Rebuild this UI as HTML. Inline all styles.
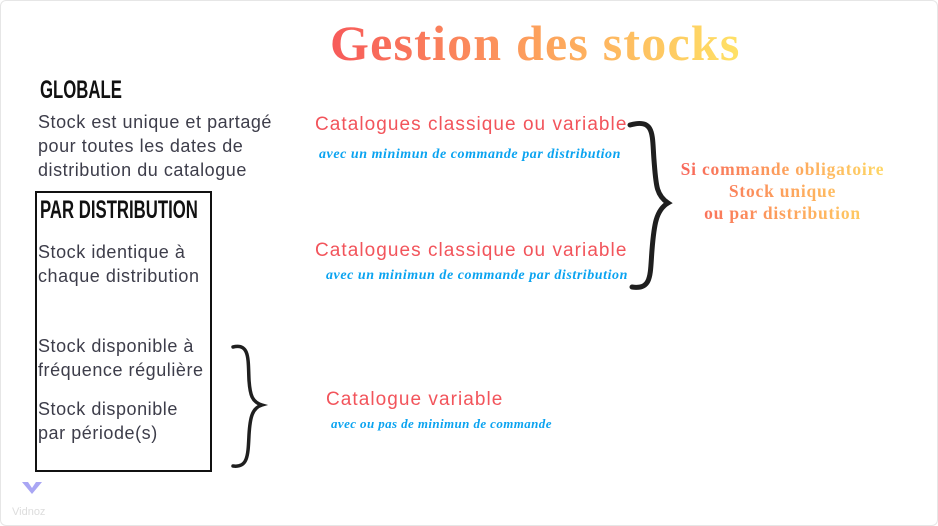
<!DOCTYPE html>
<html><head><meta charset="utf-8"><style>
body{margin:0;width:938px;height:526px;background:#fff;position:relative;overflow:hidden;font-family:"Liberation Sans","DejaVu Sans",sans-serif}
.a{position:absolute;white-space:nowrap}
.t{font-size:18px;letter-spacing:.55px;color:#3d3d4a;line-height:24px}
.h{font-family:"Liberation Sans Narrow","Liberation Sans",sans-serif;font-weight:bold;color:#111;font-size:25px;transform-origin:0 0;transform:scaleX(.67)}
.r{color:#f2545b;font-size:19px;letter-spacing:1.05px}
.b{color:#0aa3f0;font-family:"Liberation Serif",serif;font-style:italic;font-weight:bold;font-size:14px;letter-spacing:.55px}
.g{background:linear-gradient(90deg,#f75a5a,#fda05c 50%,#ffe266);-webkit-background-clip:text;background-clip:text;color:transparent}
</style></head><body>
<div style="position:absolute;inset:0;border:1px solid #e6e6e6;border-radius:6px"></div>
<div class="a g" style="left:330px;top:12px;font-family:'Liberation Serif',serif;font-weight:bold;font-size:50px;letter-spacing:1.2px;line-height:62px">Gestion des stocks</div>
<div class="a h" style="left:40px;top:76px">GLOBALE</div>
<div class="a t" style="left:38px;top:110px">Stock est unique et partagé<br>pour toutes les dates de<br>distribution du catalogue</div>
<div class="a" style="left:35px;top:191px;width:173px;height:277px;border:2px solid #111"></div>
<div class="a h" style="left:40px;top:196px">PAR DISTRIBUTION</div>
<div class="a t" style="left:38px;top:240px">Stock identique à<br>chaque distribution</div>
<div class="a t" style="left:38px;top:334px">Stock disponible à<br>fréquence régulière</div>
<div class="a t" style="left:38px;top:397px">Stock disponible<br>par période(s)</div>
<div class="a r" style="left:315px;top:114px">Catalogues classique ou variable</div>
<div class="a b" style="left:319px;top:147px">avec un minimun de commande par distribution</div>
<div class="a r" style="left:315px;top:240px">Catalogues classique ou variable</div>
<div class="a b" style="left:326px;top:268px">avec un minimun de commande par distribution</div>
<div class="a r" style="left:326px;top:389px">Catalogue variable</div>
<div class="a b" style="left:331px;top:416px;font-size:13px;letter-spacing:.4px">avec  ou pas de minimun de commande</div>
<div class="a g" style="left:660px;top:158px;width:245px;text-align:center;font-family:'Liberation Serif',serif;font-weight:bold;font-size:17.5px;letter-spacing:.8px;line-height:22px">Si commande obligatoire<br>Stock unique<br>ou par distribution</div>
<svg class="a" style="left:0;top:0" width="938" height="526">
<path d="M630 125 C655 118 652 135 654 160 C656 185 656 195 668 203 C656 210 654 225 652 250 C650 275 652 290 632 287" fill="none" stroke="#1f1f1f" stroke-width="5" stroke-linecap="round"/>
<path d="M233 347 C250 343 248 360 249 380 C250 395 252 402 262 405 C252 408 250 418 249 435 C248 455 248 468 233 466" fill="none" stroke="#1f1f1f" stroke-width="3.5" stroke-linecap="round"/>
<path d="M22 482 L32 494 L42 482 L36 482 L32 488 L28 482 Z" fill="#a9a6f4"/>
</svg>
<div class="a" style="left:12px;top:506px;font-size:11px;color:#ddd">Vidnoz</div>
</body></html>
